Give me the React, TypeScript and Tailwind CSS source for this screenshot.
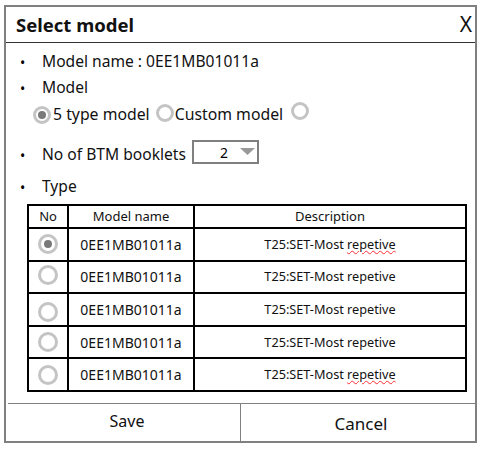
import React from "react";

const font = { fontFamily: '"Noto Sans", "Noto Sans CJK KR", sans-serif' };

function Radio({ checked = false, size = 18 }: { checked?: boolean; size?: number }) {
  return (
    <span
      className="inline-flex items-center justify-center rounded-full border-[3px] border-[#c4c4c4] bg-white shrink-0"
      style={{ width: size, height: size }}
    >
      {checked && <span className="block w-[8px] h-[8px] rounded-full bg-[#7a7a7a]" />}
    </span>
  );
}

function Bullet({ children }: { children: React.ReactNode }) {
  return (
    <div className="flex items-center h-[26px]">
      <span className="w-[36px] pl-[14px] text-[14px]">•</span>
      <span className="text-[15.6px] text-[#111]">{children}</span>
    </div>
  );
}

const rows = [
  { checked: true, offset: 0, wavy: true },
  { checked: false, offset: -4, wavy: false },
  { checked: false, offset: 6, wavy: false },
  { checked: false, offset: 0, wavy: false },
  { checked: false, offset: 0, wavy: true },
];

export default function App() {
  return (
    <div className="w-[484px] h-[450px] bg-white pt-[5px] pl-[4px]" style={font}>
      <div className="w-[473px] h-[438px] border-2 border-[#808080] flex flex-col">
        <div className="h-[36px] border-b border-[#333] flex items-center justify-between pl-[10px] pr-[3px]">
          <span className="text-[18.5px] font-bold text-[#111]">Select model</span>
          <span className="text-[21px] text-[#111]">X</span>
        </div>
        <div className="pt-[6px]">
          <Bullet>Model name : 0EE1MB01011a</Bullet>
          <Bullet>Model</Bullet>
          <div className="flex items-center h-[28px] pl-[27px] text-[15.8px] text-[#111]">
            <Radio checked />
            <span className="ml-[2px]">5 type model</span>
            <span className="ml-[6px] mt-[3px]"><Radio /></span>
            <span className="ml-[1px]">Custom model</span>
            <span className="ml-[8px] mt-[-2px]"><Radio /></span>
          </div>
          <div className="flex items-center h-[26px] mt-[13px]">
            <span className="w-[36px] pl-[14px] text-[14px]">•</span>
            <span className="text-[15.6px] text-[#111]">No of BTM booklets</span>
            <div className="ml-[6px] mt-[-6px] w-[67px] h-[24px] border-2 border-[#808080] flex items-center justify-end pr-[2px]">
              <span className="text-[14px] mr-[12px]">2</span>
              <svg width="15" height="8" viewBox="0 0 15 8"><polygon points="0,0 15,0 7.5,7" fill="#999" /></svg>
            </div>
          </div>
          <div className="mt-[6px]">
            <Bullet>Type</Bullet>
          </div>
          <table className="ml-[21px] mt-[4px] w-[440px] border-collapse border-2 border-black text-[13px] text-[#111]">
            <thead>
              <tr className="h-[23px]">
                <th className="w-[40px] border-2 border-black font-normal">No</th>
                <th className="w-[126px] border-2 border-black font-normal">Model name</th>
                <th className="border-2 border-black font-normal">Description</th>
              </tr>
            </thead>
            <tbody>
              {rows.map((r, i) => (
                <tr key={i} className="h-[32.6px]">
                  <td className="border-2 border-black">
                    <div className="flex justify-center" style={{ marginTop: r.offset }}>
                      <Radio checked={r.checked} size={20} />
                    </div>
                  </td>
                  <td className="border-2 border-black text-center text-[14px]">0EE1MB01011a</td>
                  <td className="border-2 border-black text-center text-[12.7px]">
                    T25:SET-Most{" "}
                    <span className={r.wavy ? "underline decoration-wavy decoration-red-500 decoration-1" : ""}>repetive</span>
                  </td>
                </tr>
              ))}
            </tbody>
          </table>
        </div>
        <div className="mt-auto ml-[2px] h-[38px] border-t border-[#808080] flex">
          <div className="w-[233px] border-r border-[#808080] flex items-start justify-center pt-[5px] pl-[6px] text-[16px] text-[#111]">Save</div>
          <div className="flex-1 flex items-start justify-center pt-[7px] pl-[6px] text-[17px] text-[#111]">Cancel</div>
        </div>
      </div>
    </div>
  );
}
